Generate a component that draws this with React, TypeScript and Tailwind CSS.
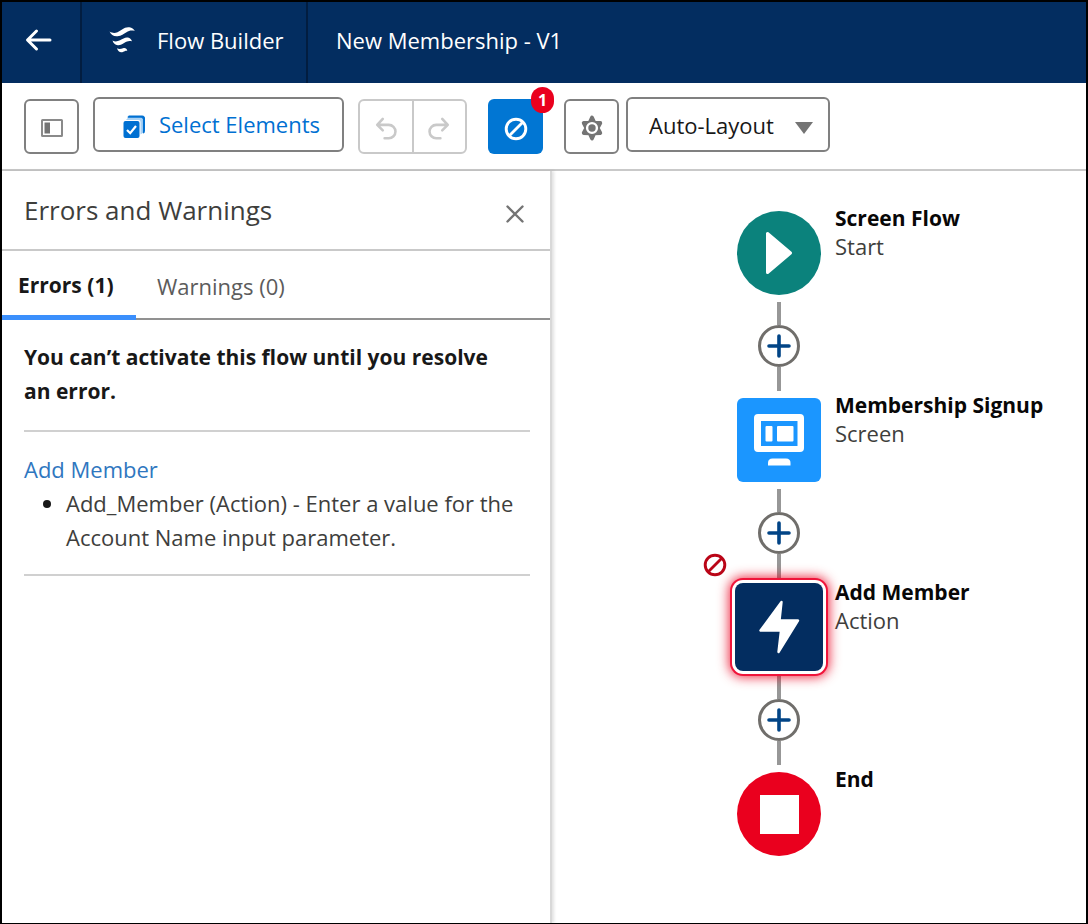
import React from "react";

type IconProps = { className?: string };

function BackArrow() {
  return (
    <svg viewBox="0 0 28 24" className="h-6 w-7" fill="none" stroke="white" strokeWidth="3" strokeLinecap="round" strokeLinejoin="round" aria-hidden="true">
      <path d="M3 12H25M11.500 3L2.500 12L11.500 21" />
    </svg>
  );
}

function FlowLogo() {
  return (
    <svg viewBox="0 0 28 28" className="h-7 w-7" fill="white" aria-hidden="true">
      <path d="M1.500 5.500C4.500 7.300 7 7.200 9.500 6.200C13.500 4.500 16 .6 21.500 1.300C24 1.600 25.500 2.900 26.800 5C23.500 4 21 4.700 18.500 6.200C15.500 8 13.500 10 9.500 10.300C5.500 10.600 3 8.800 1.500 5.500Z" />
      <path d="M4.500 14.500C7 16 9.500 15.500 12 14.300C15 12.800 17 11 20 11.500C22 11.800 23 13 24 15.300C21 14.300 19 15.200 16.500 16.700C14 18.200 12.500 19.400 9.800 19.200C7 19 5.500 17.300 4.500 14.500Z" />
      <path d="M9 22.300C11 23.500 13 22.900 15 22.300C17 21.700 18.800 22.300 19.300 24.800C17.500 24.500 16.500 25.200 15 26C12.500 27 10 26 9 22.300Z" />
    </svg>
  );
}

function PanelIcon() {
  return (
    <svg viewBox="0 0 22 18" className="h-[18px] w-[22px]" aria-hidden="true">
      <rect x="1" y="1" width="20" height="16" rx="0.5" fill="none" stroke="#8a8a8a" strokeWidth="2" />
      <rect x="3.500" y="3.500" width="5.500" height="11" fill="#747474" />
    </svg>
  );
}

function SelectElementsIcon() {
  return (
    <svg viewBox="0 0 22 24" className="h-6 w-[22px]" aria-hidden="true">
      <path d="M6 1H19.500Q21.500 1 21.500 3V16.500Q21.500 18 20 18V4.500Q20 2.500 18 2.500H5Q5 1 6 1Z" fill="#0070d2" stroke="#0070d2" strokeWidth="1" />
      <path d="M5 2.800H18Q19.700 2.800 19.700 4.500V18L17.500 19.500V7Q17.500 5 15.500 5H3Z" fill="#a9d2f5" />
      <rect x="0.500" y="6" width="16" height="17" rx="2" fill="#0070d2" />
      <path d="M4 15L7.200 18.200L13 11" fill="none" stroke="white" strokeWidth="2.200" />
    </svg>
  );
}

function UndoIcon({ className }: IconProps) {
  return (
    <svg viewBox="0 0 24 26" className={className} fill="none" stroke="currentColor" strokeWidth="2.800" strokeLinecap="round" strokeLinejoin="round" aria-hidden="true">
      <path d="M8.500 2L2.500 8.500L8.500 14.500M3 8.500H15A7 7 0 0 1 15 23H10.500" />
    </svg>
  );
}

function BanIcon({ className }: IconProps) {
  return (
    <svg viewBox="0 0 24 24" className={className} fill="none" stroke="currentColor" strokeWidth="2.900" aria-hidden="true">
      <circle cx="12" cy="12" r="9.800" />
      <path d="M5.500 18.500L18.500 5.500" />
    </svg>
  );
}

function GearIcon() {
  return (
    <svg viewBox="0 0 24 26" className="h-[26px] w-6" aria-hidden="true">
      <path
        d="M12 2.600L14.300 7.600L20.300 8L17.600 13L20.300 18L14.300 18.400L12 23.400L9.700 18.400L3.700 18L6.400 13L3.700 8L9.700 7.600Z"
        fill="#747474"
        stroke="#747474"
        strokeWidth="3.800"
        strokeLinejoin="round"
      />
      <circle cx="12" cy="13" r="4.900" fill="#747474" stroke="white" strokeWidth="2.400" />
    </svg>
  );
}

function PlusIcon() {
  return (
    <svg viewBox="0 0 24 24" className="h-6 w-6" stroke="#014486" strokeWidth="3.600" strokeLinecap="round" aria-hidden="true">
      <path d="M12 2V22M2 12H22" />
    </svg>
  );
}

function PlayIcon() {
  return (
    <svg viewBox="0 0 84 84" className="h-full w-full" aria-hidden="true">
      <path d="M30.500 22.500V61.500L53.500 42Z" fill="white" stroke="white" strokeWidth="3" strokeLinejoin="round" />
    </svg>
  );
}

function ScreenIcon() {
  return (
    <svg viewBox="0 0 84 84" className="h-full w-full" aria-hidden="true">
      <path fillRule="evenodd" fill="white" d="M21 16H63Q67 16 67 20V50Q67 54 63 54H21Q17 54 17 50V20Q17 16 21 16ZM24 23H60.500V48H24Z" />
      <rect x="28.500" y="28" width="7" height="15.500" rx="1" fill="white" />
      <rect x="40" y="28" width="16.500" height="15.500" rx="1" fill="white" />
      <path d="M31 67.500V65Q31 60.500 35.500 60.500H49Q53.500 60.500 53.500 65V67.500Z" fill="white" />
    </svg>
  );
}

function BoltIcon() {
  return (
    <svg viewBox="0 0 88 88" className="h-full w-full" aria-hidden="true">
      <path d="M46.500 19L25.500 47.500H46L43.500 69L63 37.500H44.500L46.500 19Z" fill="white" stroke="white" strokeWidth="2.400" strokeLinejoin="round" />
    </svg>
  );
}

const iconButton =
  "mt-0.5 flex h-[55px] w-[55px] shrink-0 items-center justify-center rounded-md border-2 border-[#808080] bg-white pt-0.5";

function Connector({ toAction = false, fromAction = false }: { toAction?: boolean; fromAction?: boolean }) {
  return (
    <div
      className={`flex h-[103px] w-[84px] flex-col items-center ${fromAction ? "pt-0" : "pt-[7px]"} ${toAction ? "pb-0" : "pb-[7px]"}`}
    >
      <div className={`w-1 bg-[#979797] ${fromAction ? "h-[30px]" : "h-[23px]"}`} />
      <button aria-label="Add element" className="flex h-[42px] w-[42px] shrink-0 items-center justify-center rounded-full border-3 border-[#706e6b] bg-white">
        <PlusIcon />
      </button>
      <div className="w-1 flex-1 bg-[#979797]" />
    </div>
  );
}

function FlowNode({ title, kind, children }: { title: string; kind?: string; children: React.ReactNode }) {
  return (
    <div className="flex h-[84px] gap-[14px]">
      <div className="relative flex h-[84px] w-[84px] shrink-0 items-center justify-center">{children}</div>
      <div className="-mt-[7px] text-[22px] leading-7 whitespace-nowrap">
        <h3 className="text-[21px] leading-7 font-bold text-[#080707]">{title}</h3>
        {kind && <p className="text-[#3e3e3c]">{kind}</p>}
      </div>
    </div>
  );
}

export default function App() {
  return (
    <div className="flex min-h-screen flex-col border-2 border-b border-black bg-white font-['Open_Sans',sans-serif] text-[22px] text-[#3e3e3c]">
      <header className="flex h-[81px] items-stretch bg-[#032d60] text-white">
        <button aria-label="Back" className="flex w-20 items-center justify-center border-r-2 border-[#021d40] pr-1 pb-1.5">
          <BackArrow />
        </button>
        <div className="flex w-[226px] items-center border-r-2 border-[#021d40] pb-1.5 pl-[26px]">
          <FlowLogo />
          <span className="pl-[21px] leading-8 whitespace-nowrap">Flow Builder</span>
        </div>
        <h1 className="flex items-center pb-1.5 pl-7 leading-8 whitespace-nowrap">New Membership - V1</h1>
      </header>

      <div className="flex h-[88px] items-start border-b-2 border-[#c9c9c9] pt-[14px] pl-[22px]">
        <button aria-label="Toggle toolbox" className={iconButton}>
          <PanelIcon />
        </button>
        <button className="ml-[14px] flex h-[55px] w-[251px] items-center justify-center gap-[14px] rounded-md border-2 border-[#808080] pt-1 pl-1.5 text-[#0070d2]">
          <SelectElementsIcon />
          <span className="pb-1 whitespace-nowrap">Select Elements</span>
        </button>
        <div className="mt-0.5 ml-[14px] flex h-[55px] w-[109px] divide-x-2 divide-[#c9c9c9] rounded-md border-2 border-[#c9c9c9] text-[#c9c9c9]">
          <button aria-label="Undo" className="flex flex-1 items-center justify-center pt-1">
            <UndoIcon className="h-6 w-6" />
          </button>
          <button aria-label="Redo" className="flex flex-1 items-center justify-center pt-1">
            <UndoIcon className="h-6 w-6 -scale-x-100" />
          </button>
        </div>
        <button aria-label="Show errors" className="relative mt-0.5 ml-[21px] flex h-[55px] w-[55px] items-center justify-center rounded-md bg-[#0176d3] pt-1 text-white">
          <BanIcon className="h-6 w-6" />
          <span className="absolute -top-3 -right-[11px] flex h-[26px] w-[23px] items-center justify-center rounded-full bg-[#ea001e] text-base font-bold">
            1
          </span>
        </button>
        <div className="ml-[21px]">
          <button aria-label="Settings" className={iconButton}>
            <GearIcon />
          </button>
        </div>
        <div className="relative ml-[7px]">
          <select aria-label="Layout mode" className="h-[55px] w-[204px] appearance-none rounded-md border-2 border-[#808080] bg-white pt-0.5 pl-[21px] text-[#181818]">
            <option>Auto-Layout</option>
          </select>
          <svg viewBox="0 0 18 12" className="pointer-events-none absolute top-[25px] right-[17px] h-3 w-[18px]" aria-hidden="true">
            <path d="M0 0H18L9 12Z" fill="#747474" />
          </svg>
        </div>
      </div>

      <div className="flex flex-1">
        <aside className="w-[550px] shrink-0 border-r-2 border-[#d8d8d8] shadow-[2px_0_3px_rgba(0,0,0,0.12)]">
          <div className="flex h-20 items-center justify-between border-b-2 border-[#c9c9c9] pr-[25px] pl-[22px]">
            <h2 className="text-[26px] leading-9">Errors and Warnings</h2>
            <button aria-label="Close panel" className="pt-2">
              <svg viewBox="0 0 20 20" className="h-5 w-5" stroke="#747474" strokeWidth="2.400" strokeLinecap="round" aria-hidden="true">
                <path d="M2.500 2.500L17.500 17.500M17.500 2.500L2.500 17.500" />
              </svg>
            </button>
          </div>
          <div role="tablist" className="flex h-[69px] border-b-2 border-[#919191]">
            <button role="tab" aria-selected="true" className="-mb-0.5 w-[134px] border-b-5 border-[#3b8ffc] pt-1.5 pl-4 text-left text-[21px] font-bold whitespace-nowrap text-[#181818]">
              Errors (1)
            </button>
            <button role="tab" aria-selected="false" className="-mb-0.5 border-b-5 border-transparent pt-1.5 pl-[21px] whitespace-nowrap text-[#5c5c5c]">
              Warnings (0)
            </button>
          </div>
          <section className="pr-5 pl-[22px]">
            <div className="border-b-2 border-[#d0d0d0] pt-5 pr-8 pb-[22px]">
              <p className="text-[21px] leading-[34px] font-bold text-[#181818]">
                You can’t activate this flow until you resolve an error.
              </p>
            </div>
            <div className="border-b-2 border-[#d0d0d0] pt-5 pb-5 leading-[34px]">
              <a href="#add-member" className="block text-[#2f77bf]">
                Add Member
              </a>
              <ul className="list-disc pl-[42px] marker:text-[#181818]">
                <li>Add_Member (Action) - Enter a value for the Account Name input parameter.</li>
              </ul>
            </div>
          </section>
        </aside>

        <main className="flex flex-1 flex-col pt-10 pl-[185px]">
          <FlowNode title="Screen Flow" kind="Start">
            <div className="h-full w-full rounded-full bg-[#0b827c]">
              <PlayIcon />
            </div>
          </FlowNode>
          <Connector />
          <FlowNode title="Membership Signup" kind="Screen">
            <div className="h-full w-full rounded-md bg-[#1b96ff]">
              <ScreenIcon />
            </div>
          </FlowNode>
          <Connector toAction />
          <FlowNode title="Add Member" kind="Action">
            <div className="h-[88px] w-[88px] shrink-0 rounded-lg bg-[#032d60] shadow-[0_0_0_3px_#fff,0_0_0_5px_#f0143a,0_0_12px_6px_rgba(234,0,30,0.85)]">
              <BoltIcon />
            </div>
            <BanIcon className="absolute -top-8 -left-[34px] h-6 w-6 text-[#ba0517]" />
          </FlowNode>
          <Connector fromAction />
          <FlowNode title="End">
            <div className="flex h-full w-full items-center justify-center rounded-full bg-[#ea001e]">
              <div className="h-[39px] w-[39px] bg-white" />
            </div>
          </FlowNode>
        </main>
      </div>
    </div>
  );
}
